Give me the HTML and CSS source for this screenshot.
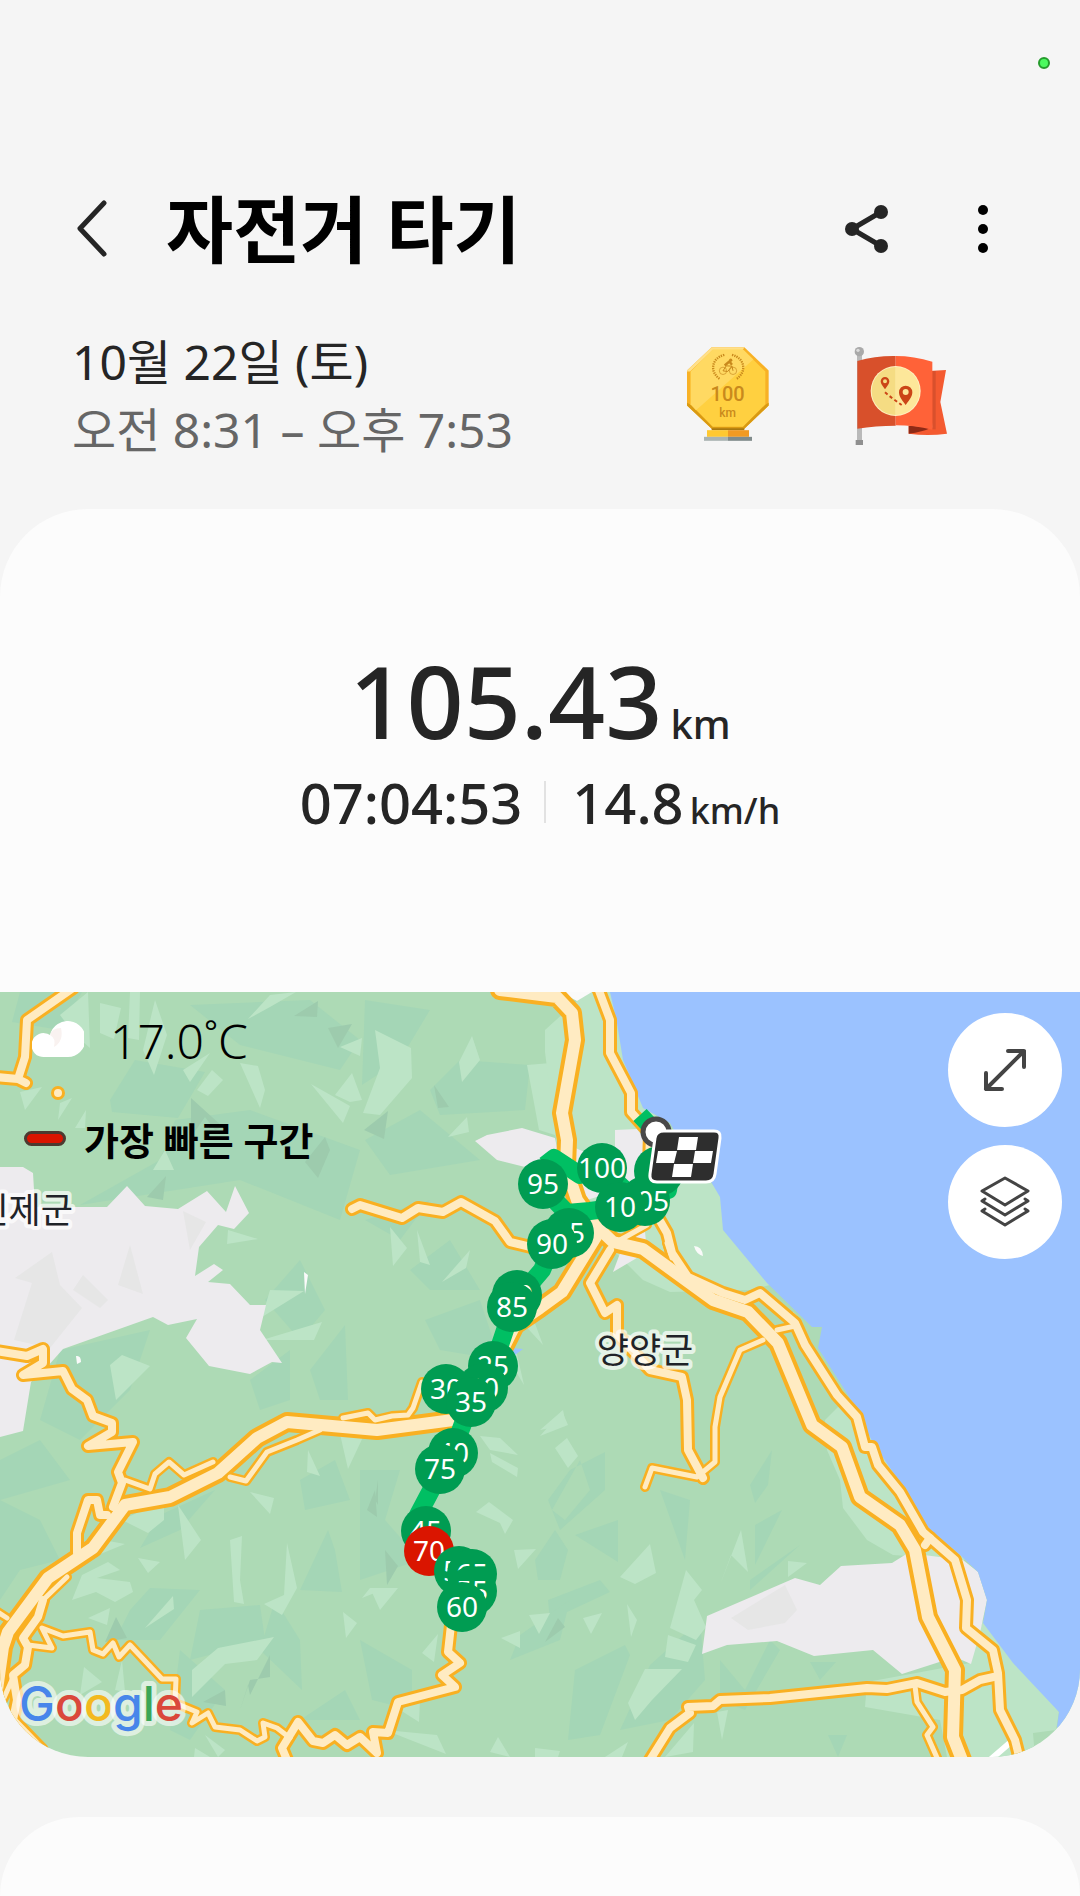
FILE: index.html
```
<!DOCTYPE html>
<html lang="ko">
<head>
    <meta charset="UTF-8">
    <meta name="viewport" content="width=device-width, initial-scale=1.0">
    <title>자전거 타기</title>
    <link rel="stylesheet" href="styles.css">
</head>
<body>
    <div class="status-bar"><span class="camera-dot"></span></div>

    <header class="app-bar">
        <button class="icon-button back" aria-label="뒤로">
            <svg width="32" height="60" viewBox="0 0 32 60"><path d="M28 4 L4 29.500 L28 55"/></svg>
        </button>
        <h1>자전거 타기</h1>
        <button class="icon-button share" aria-label="공유">
            <svg width="44" height="50" viewBox="0 0 44 50">
                <path d="M36 8 L7 25 L36 42"/>
                <circle cx="36" cy="8" r="7"/><circle cx="7" cy="25" r="7"/><circle cx="36" cy="42" r="7"/>
            </svg>
        </button>
        <button class="icon-button more" aria-label="더보기">
            <svg width="12" height="50" viewBox="0 0 12 50">
                <circle cx="6" cy="6" r="5"/><circle cx="6" cy="25" r="5"/><circle cx="6" cy="44" r="5"/>
            </svg>
        </button>
    </header>

    <section class="summary">
        <div class="when">
            <p class="date">10월 22일 (토)</p>
            <p class="time">오전 8:31 – 오후 7:53</p>
        </div>
        <div class="badges">
            <svg width="84" height="97" viewBox="140 82 252 290">
                <path fill="#f8b125" d="M217 85H315L388 155V260L315 330H217L143 260V155Z"/>
                <path fill="#ffe08a" d="M217 85H315L310 94H221L152 158H143V155Z"/>
                <path fill="#d99a12" d="M143 260V252L152 256L221 323H310L380 256L388 252V260L315 330H217Z"/>
                <path fill="#ffd040" d="M220 93H312L378 158V256L311 324H220L154 256V158Z"/>
                <path fill="#ffd962" d="M220 93H312L342 122L170 274L154 256V158Z"/>
                <g fill="none" stroke="#c9891c">
                    <path stroke-width="7" stroke-dasharray="4 3" d="M255 108C215 118 211 160 241 180M278 108C318 118 322 160 292 180"/>
                    <g stroke-width="2"><circle cx="251" cy="156" r="11"/><circle cx="281" cy="156" r="11"/></g>
                    <path stroke-width="3" d="M251 156L261 141L278 142L265 158ZM278 142L281 156"/>
                    <path stroke-width="7" d="M256 140L270 128L278 138"/>
                </g>
                <circle cx="274" cy="124" r="5" fill="#c9891c"/>
                <text class="badge-value" x="265" y="247">100</text>
                <text class="badge-unit" x="265" y="296">km</text>
                <path fill="#a8790f" d="M217 328H315V334H217Z"/>
                <path fill="#ffc830" d="M203 334H266V354H203Z"/>
                <path fill="#f29a22" d="M266 334H329V354H266Z"/>
                <path fill="#aab4b2" d="M194 354H266V366H194Z"/>
                <path fill="#808b8b" d="M266 354H338V366H266Z"/>
            </svg>
            <svg width="94" height="100" viewBox="645 75 282 300">
                <path fill="#b9b9b9" d="M654 98H669V372H654Z"/>
                <path fill="#8f8f8f" d="M650 357H672V372H650Z"/>
                <circle cx="661" cy="92" r="14" fill="#a9a9a9"/>
                <circle cx="657" cy="88" r="5" fill="#dcdcdc"/>
                <path fill="#f45a30" d="M870 150L921 147L904 243L924 338Q866 346 809 338V314L880 320Z"/>
                <path fill="#d9502c" d="M880 150H890V325H880Z"/>
                <path fill="#8f2a16" d="M809 314L880 319Q850 334 809 338Z"/>
                <path fill="#d8502b" d="M655 120Q710 104 770 105V314Q710 314 655 323Z"/>
                <path fill="#ff6238" d="M770 105Q825 105 880 122V326Q825 313 770 313Z"/>
                <circle cx="770" cy="210" r="75" fill="#fff0c0"/>
                <path fill="#f5dc83" d="M770 138A72 72 0 0 0 770 282Z"/>
                <path fill="#fde79a" d="M770 138A72 72 0 0 1 770 282Z"/>
                <path fill="#cb4517" fill-rule="evenodd" d="M738 205C730 194 725 188 725 181A13 13 0 0 1 751 181C751 188 746 194 738 205ZM738 175A6 6 0 1 0 738 187A6 6 0 1 0 738 175ZM800 252C786 234 780 225 780 214A20 20 0 0 1 820 214C820 225 814 234 800 252ZM800 204A9 9 0 1 0 800 222A9 9 0 1 0 800 204Z"/>
                <path fill="none" stroke="#cb4517" stroke-width="6" stroke-dasharray="10 8" d="M738 214L760 232L788 252"/>
            </svg>
        </div>
    </section>

    <main class="card">
        <div class="stats">
            <p class="distance">105.43<span class="unit">km</span></p>
            <div class="stats-row">
                <span>07:04:53</span>
                <span class="divider"></span>
                <span>14.8<span class="unit">km/h</span></span>
            </div>
        </div>

        <div class="map">
            <svg class="map-canvas" viewBox="0 992 1080 765">
                <defs>
                    <g id="roads-small">
                        <path d="M125 1480L150 1489L155 1474L169 1462L184 1475L213 1462"/>
                        <path d="M230 1477L246 1481L267 1452L297 1440L320 1430"/>
                        <path d="M343 1418L368 1413L375 1420L392 1416L408 1415L413 1408L422 1382"/>
                        <path d="M-4 1611L7 1618M28 1645L52 1648L42 1628L63 1636L90 1632L93 1650L103 1654L113 1643L119 1657L130 1645L162 1679L176 1679L175 1703L197 1712L192 1723L208 1713L215 1727L240 1730L257 1741L265 1737L263 1723L277 1728L290 1738"/>
                        <path d="M645 1487L652 1468L697 1477L715 1462L715 1427L720 1397L740 1350L763 1340M777 1330L795 1326"/>
                        <path d="M915 1686L917 1702L933 1727L927 1735L938 1760"/>
                        <path d="M12 1680L3 1700M620 1240L647 1225M672 1258L667 1243"/>
                        <path d="M67 1577L43 1600"/>
                    </g>
                    <g id="roads-medium">
                        <path d="M73 988L27 1020L25 1057L18 1079M-4 1077L18 1079L26 1083M58 1093L58 1093"/>
                        <path d="M-4 1351L27 1356L43 1349L43 1363L23 1375L63 1371L72 1389L87 1400L93 1416L112 1423L112 1432L88 1446L133 1442L118 1472L122 1483L113 1507"/>
                        <path d="M77 1553L77 1533L88 1500L97 1500L100 1515L107 1515"/>
                        <path d="M43 1600L38 1617L23 1638L28 1647L25 1665L13 1675L17 1700L13 1720L42 1750"/>
                        <path d="M287 1760L282 1748L298 1722L313 1741L323 1743L335 1735L347 1745L360 1737L377 1753L373 1732L388 1733L398 1702L455 1687L442 1675L460 1663L448 1652L451 1625"/>
                        <path d="M352 1209L360 1205L402 1218L418 1208L443 1212L461 1202L495 1221L510 1242L535 1248"/>
                        <path d="M598 988L610 1020L610 1053L631 1093L631 1112L650 1133L648 1200L667 1233L672 1253L688 1277L723 1293L745 1300L760 1293L795 1323L805 1345L837 1395L857 1417L865 1447L872 1447L878 1465L900 1492L923 1532L955 1560L967 1600L966 1628L993 1650L998 1673L1000 1710L1015 1740L1020 1760"/>
                        <path d="M610 1250L590 1283L605 1313L617 1305L617 1334L650 1370L682 1377L687 1400L688 1450L703 1478"/>
                        <path d="M650 1760L670 1728L690 1713L688 1707L713 1706L720 1700L770 1698L867 1688L887 1689L917 1683L945 1692L962 1690L980 1680L998 1676"/>
                        <path d="M930 1538L925 1545"/>
                    </g>
                    <g id="roads-large">
                        <path d="M-3 1690L3 1647L8 1632L48 1578L93 1548L125 1505L170 1497L218 1473L257 1438L287 1422L377 1430L453 1420L485 1385L515 1325L540 1308L562 1292L597 1235"/>
                        <path d="M500 990L557 997L572 1013L575 1040L562 1113L567 1140L566 1167L577 1200L593 1223L613 1242L643 1249L713 1300L748 1312L778 1343L812 1425L842 1447L860 1497L900 1525L915 1550L928 1617L955 1670L953 1737L962 1760"/>
                    </g>
                </defs>

                <rect class="land" y="992" width="1080" height="765"/>

                <!-- terrain shading -->
                <g class="terrain-teal">
                    <path d="M20 992L82 992L60 1030L12 1022ZM110 1100L135 1060L205 1072L178 1118L112 1112ZM190 1005L310 1000L360 1040L340 1070L240 1045ZM175 1120L250 1110L360 1150L340 1220L240 1180L80 1205L160 1160Z"/>
                    <path d="M60 1350L150 1330L130 1390L80 1440L40 1420ZM265 1300L300 1260L325 1310L300 1340ZM310 1370L345 1325L348 1400L320 1400ZM300 1480L335 1460L350 1500L305 1510ZM335 1550L328 1530L300 1590L342 1592Z"/>
                    <path d="M0 1460L40 1440L70 1480L0 1500ZM0 1500L40 1520L60 1560L20 1570L0 1600ZM130 1610L150 1588L200 1590L160 1640L115 1640ZM200 1610L260 1605L265 1640L190 1660ZM140 1548L160 1515L215 1490L180 1530Z"/>
                    <path d="M430 1090L460 1060L530 1065L525 1110L440 1115ZM365 1000L430 1010L400 1060L362 1085ZM410 1270L450 1240L480 1290L430 1290ZM425 1320L480 1300L500 1360L440 1350ZM365 1140L420 1110L480 1160L390 1175Z"/>
                    <path d="M570 1470L605 1452L605 1490L560 1530L548 1500ZM535 1560L555 1530L568 1550L560 1580L538 1580ZM575 1535L618 1520L618 1562ZM580 1460L552 1510L565 1520L590 1490ZM548 1600L600 1580L610 1592L550 1620Z"/>
                    <path d="M575 1670L625 1645L630 1655L600 1735L568 1740ZM650 1665L700 1620L705 1680L670 1720L620 1730ZM750 1485L772 1450L768 1485L755 1503ZM755 1525L782 1510L755 1565ZM750 1580L800 1545L750 1590ZM660 1490L690 1500L685 1560Z"/>
                    <path d="M360 1470L400 1470L385 1520L420 1560L360 1580ZM360 1640L412 1670L412 1710L372 1700ZM275 1600L300 1640L302 1690L260 1650ZM828 1735L847 1735L838 1757ZM810 1662L836 1662L820 1680ZM180 1650L225 1690L190 1740L170 1730Z"/>
                    <path d="M430 1200L400 1240L365 1220ZM250 1380L290 1350L290 1400L260 1410ZM300 1720L345 1690L360 1720ZM720 1660L745 1690L770 1640L780 1650L745 1710L720 1700ZM570 1600L520 1635L510 1660L560 1640Z"/>
                </g>
                <g class="terrain-light">
                    <path d="M88 992L90 1048L75 1035L60 1015ZM100 1003L121 1008L114 1039L100 1033ZM130 992L140 992L139 1040L128 1038ZM155 1000L167 1035L154 1075L143 1050ZM248 1019L270 995L296 992L270 1007Z"/>
                    <path d="M183 1070L210 1053L190 1082ZM197 1090L212 1070L223 1080L208 1096ZM240 1063L258 1066L265 1090L260 1108ZM311 1084L350 1106L343 1123ZM335 1095L352 1073L362 1100L350 1102ZM340 1047L362 1038L360 1056Z"/>
                    <path d="M228 1230L258 1239L227 1244ZM270 1290L304 1291L262 1317ZM262 1340L322 1322L314 1340ZM110 1365L122 1355L150 1366L116 1400ZM20 1092L42 1087L25 1110ZM60 1103L72 1098L58 1120ZM153 1170L165 1150L174 1170ZM85 1128L86 1110L75 1128Z"/>
                    <path d="M375 1030L411 1048L412 1078L380 1115L363 1113L380 1068ZM472 1036L480 1060L462 1082L459 1062ZM448 1137L467 1117L469 1132ZM390 1227L407 1248L393 1266ZM417 1230L430 1265L420 1262ZM442 1282L470 1250L466 1268ZM527 1065L563 1062L555 1135L539 1130ZM530 1310L543 1345L520 1320ZM540 1430L563 1410L566 1425ZM516 1350L524 1385L512 1365Z"/>
                    <path d="M178 1505L201 1540L185 1560ZM230 1540L242 1536L240 1580L244 1604L234 1602ZM287 1543L297 1588L282 1615L264 1604L284 1595ZM72 1600L82 1575L108 1562L120 1570L97 1578L130 1582L133 1592L115 1602L96 1592ZM138 1558L160 1562L148 1573ZM145 1628L173 1596L174 1609ZM88 1618L110 1608L107 1625Z"/>
                    <path d="M192 1670L218 1648L274 1637L257 1660L225 1664L192 1697ZM343 1612L357 1623L346 1638ZM250 1492L274 1498L270 1514ZM308 1450L320 1476L307 1472ZM340 1434L363 1437L348 1469ZM370 1588L382 1590L362 1598ZM84 1667L102 1682L80 1695ZM122 1660L125 1692L115 1690ZM205 1735L225 1750L218 1757ZM195 1748L210 1757H194ZM122 1520L164 1500V1520L148 1533ZM103 1540L125 1544L98 1555Z"/>
                    <path d="M480 1436L500 1438L518 1455L490 1450ZM490 1453L518 1468L517 1477L492 1462ZM540 1436L562 1411L568 1425ZM555 1448L567 1438L578 1456L568 1468ZM476 1512L489 1502L513 1520L505 1534L500 1523ZM514 1550L536 1549L518 1569ZM620 1577L650 1544L656 1573L635 1584ZM686 1570L702 1590L694 1600L706 1627L696 1640L670 1628Z"/>
                    <path d="M529 1615L550 1613L539 1634ZM583 1618L602 1613L591 1634ZM627 1604L637 1620L631 1637ZM501 1638L520 1631V1648ZM668 1635L696 1645L688 1662L665 1657ZM645 1669H682L652 1700L635 1720L628 1703ZM370 1588H398L380 1610ZM422 1653L438 1634L434 1662ZM400 1710L420 1700L419 1722ZM385 1730L437 1735L446 1754ZM498 1737L510 1757L490 1752ZM535 1748L560 1751L558 1757H535ZM605 1757L628 1742L622 1757ZM665 1757L694 1723L693 1752Z"/>
                    <path d="M720 1585L741 1530L748 1572L731 1555ZM788 1561L807 1563L788 1577ZM717 1712L728 1710L722 1740Z"/>
                </g>
                <g class="terrain-dark">
                    <path d="M191 1098L223 1127L215 1130L205 1117L191 1137ZM294 1016L318 1001L317 1017ZM328 1028L352 1024L338 1048ZM305 1162L325 1137L330 1150L318 1178ZM147 1197L166 1176L163 1200ZM434 1085L449 1107L438 1108ZM364 1130L388 1111L384 1139ZM105 1642L116 1617L127 1638ZM203 1702L225 1690L226 1706ZM240 1710L248 1685L250 1695L270 1655V1677L250 1680ZM367 1510L375 1490L377 1517ZM385 1550L398 1566L387 1585ZM545 1642L558 1618L565 1627ZM690 1260L700 1253L723 1267L718 1280L700 1273ZM375 1500L378 1480V1505Z"/>
                </g>

                <!-- coastal plain -->
                <path class="plain" d="M545 1030L577 1001L592 992H620L650 1108L723 1197L726 1230L770 1285L750 1290L670 1292L643 1280L613 1250L593 1215L560 1170L545 1052Z"/>
                <path class="plain" d="M825 1420L845 1400L880 1450L965 1560L893 1555L867 1540L843 1508L840 1480L827 1450ZM983 1620L1059 1712L1056 1730L1033 1733L1035 1757H947L940 1720L865 1707L867 1682L970 1663Z"/>

                <!-- built-up areas -->
                <g class="urban">
                    <path d="M0 1167H23L33 1173L35 1207H107L127 1186L145 1206L178 1209L207 1191L226 1212L235 1186L249 1213L234 1229L218 1225L199 1247L195 1276L214 1264L223 1270L208 1282L230 1284L250 1305H266L260 1330L282 1363L272 1362L250 1374L209 1366L186 1338L197 1319L168 1325L153 1317L63 1349L47 1367L31 1382L23 1431L0 1437Z"/>
                    <path d="M475 1141L487 1135L522 1128L555 1138L562 1172L537 1170L497 1160Z"/>
                    <path d="M573 1147L587 1153L610 1193L580 1202L570 1180ZM615 1130L637 1129L650 1147L637 1190L615 1180ZM613 1272L625 1240L645 1232L647 1252Z"/>
                    <path d="M702 1654L707 1616L795 1578L820 1585L841 1566L892 1563L908 1553L963 1560L978 1572L987 1600L980 1633L971 1664L955 1657L902 1674L873 1650L814 1656L777 1641L727 1645Z"/>
                </g>
                <g class="urban-shade">
                    <path d="M15 1278L52 1252L60 1285L82 1308L50 1348L14 1340L32 1283ZM118 1285L130 1245L143 1294ZM73 1290L83 1275L108 1300L100 1308ZM183 1211L206 1222L190 1250ZM731 1618L785 1585L797 1610L785 1623L748 1630Z"/>
                </g>
                <path class="sand" d="M560 992H592L577 1001ZM304 1272L308 1275L305 1294ZM76 1356Q81 1355 81 1362L77 1364ZM694 1246Q702 1246 703 1256Q696 1254 694 1246Z"/>

                <path class="water" d="M610 992L617 1023L623 1060L643 1108L670 1123L690 1160L710 1180L720 1197L723 1230L767 1283L812 1327H822L818 1348L853 1403L873 1443L903 1487L927 1527L960 1555L978 1572L987 1600L983 1623L1013 1663L1059 1712L1057 1727L1080 1757V992ZM511 1348L523 1349L515 1355Z"/>
                <path class="lane" d="M1012 1741L990 1760M790 1319L795 1314"/>

                <g class="casing">
                    <use href="#roads-small" stroke-width="10"/>
                    <use href="#roads-medium" stroke-width="14"/>
                    <use href="#roads-large" stroke-width="20"/>
                </g>
                <g class="surface">
                    <use href="#roads-small" stroke-width="5"/>
                    <use href="#roads-medium" stroke-width="8"/>
                    <use href="#roads-large" stroke-width="12"/>
                </g>

                <g class="map-label">
                    <text x="645" y="1363" text-anchor="middle">양양군</text>
                    <text x="73" y="1223" text-anchor="end">인제군</text>
                </g>

                <path class="route" d="M640 1115L652 1128L672 1165L668 1190L620 1207L590 1211L567 1213L545 1190M545 1165L554 1158L580 1175L602 1168L625 1190L645 1201M575 1212L553 1244L542 1270L514 1303L500 1345L493 1366L471 1402L455 1445L418 1515L426 1540L459 1571L472 1590L455 1628"/>

                <g class="start"><circle cx="656" cy="1132" r="13"/></g>
                <g class="marker" transform="translate(602 1168)"><circle r="25"/><text y="10">100</text></g>
                <g class="marker" transform="translate(659 1171)"><circle r="25"/></g>
                <g class="marker" transform="translate(645 1201)"><circle r="25"/><text y="10">105</text></g>
                <g class="marker" transform="translate(620 1207)"><circle r="25"/><text y="10">10</text></g>
                <g class="marker" transform="translate(543 1184)"><circle r="25"/><text y="10">95</text></g>
                <g class="marker" transform="translate(569 1233)"><circle r="25"/><text y="10">15</text></g>
                <g class="marker" transform="translate(552 1244)"><circle r="25"/><text y="10">90</text></g>
                <g class="marker" transform="translate(517 1295)"><circle r="25"/><text y="10">20</text></g>
                <g class="marker" transform="translate(512 1307)"><circle r="25"/><text y="10">85</text></g>
                <g class="marker" transform="translate(493 1366)"><circle r="25"/><text y="10">25</text></g>
                <g class="marker" transform="translate(446 1389)"><circle r="25"/><text y="10">30</text></g>
                <g class="marker" transform="translate(483 1388)"><circle r="25"/><text y="10">80</text></g>
                <g class="marker" transform="translate(471 1402)"><circle r="25"/><text y="10">35</text></g>
                <g class="marker" transform="translate(453 1453)"><circle r="25"/><text y="10">40</text></g>
                <g class="marker" transform="translate(440 1469)"><circle r="25"/><text y="10">75</text></g>
                <g class="marker" transform="translate(426 1531)"><circle r="25"/><text y="10">45</text></g>
                <g class="marker fastest" transform="translate(429 1551)"><circle r="25"/><text y="10">70</text></g>
                <g class="marker" transform="translate(459 1571)"><circle r="25"/><text y="10">50</text></g>
                <g class="marker" transform="translate(472 1574)"><circle r="25"/><text y="10">65</text></g>
                <g class="marker" transform="translate(472 1591)"><circle r="25"/><text y="10">55</text></g>
                <g class="marker" transform="translate(462 1607)"><circle r="25"/><text y="10">60</text></g>

                <g class="finish">
                    <path class="finish-body" d="M664 1131H714Q721 1131 720 1138L715 1174Q714 1182 706 1182H657Q649 1182 650 1174L655 1138Q656 1131 664 1131Z"/>
                    <path fill="#fff" d="M679 1137H698L696 1150H677ZM658 1151H677L674 1163H656ZM695 1151H713L711 1163H693ZM674 1164H693L691 1177H672Z"/>
                </g>

                <text class="google" x="19" y="1721"><tspan fill="#4886ea">G</tspan><tspan fill="#da483b">o</tspan><tspan fill="#f3b91f">o</tspan><tspan fill="#4886ea">g</tspan><tspan fill="#3ba658">l</tspan><tspan fill="#da483b">e</tspan></text>
            </svg>

            <div class="map-info">
                <div class="weather">
                    <svg width="52" height="38" viewBox="0 0 52 38">
                        <path fill="#fff" d="M13 36A12 12 0 1 1 18 14A18 18 0 1 1 36 36Z"/>
                        <path fill="#f9f2f0" d="M18 14Q20 7 29 7Q32 20 22 26Q24 17 18 14Z"/>
                    </svg>
                    <span>17.0˚C</span>
                </div>
                <div class="legend"><span class="legend-mark"></span><span>가장 빠른 구간</span></div>
            </div>

            <div class="map-controls">
                <button class="round-button" aria-label="지도 확대">
                    <svg width="46" height="46" viewBox="0 0 46 46"><path stroke-width="4" d="M4 42L42 4M26 4H42V20M4 26V42H20"/></svg>
                </button>
                <button class="round-button" aria-label="지도 유형">
                    <svg width="52" height="52" viewBox="0 0 52 52"><path stroke-width="3" d="M26 2L49 15L26 29L3 15ZM6 23L3 25L26 39L49 25L46 23M6 33L3 35L26 49L49 35L46 33"/></svg>
                </button>
            </div>
        </div>
    </main>

    <section class="card next-card"></section>
</body>
</html>
```
FILE: styles.css
```
* {
    box-sizing: border-box;
}
body {
    margin: 0;
    min-height: 100vh;
    display: flex;
    flex-direction: column;
    background-color: #f5f5f5;
    color: #252525;
    font-family: "Noto Sans", "Noto Sans CJK KR", sans-serif;
}
h1, p {
    margin: 0;
}
button {
    padding: 0;
    border: none;
    cursor: pointer;
}
svg {
    display: block;
}

/* header */
.status-bar {
    display: flex;
    justify-content: flex-end;
    height: 124px;
    padding: 57px 30px 0;
}
.camera-dot {
    width: 12px;
    height: 12px;
    border: 2px solid #259b2c;
    border-radius: 50%;
    background-color: #4cfa60;
}
.app-bar {
    display: flex;
    align-items: center;
    height: 210px;
    padding: 0 91px 0 76px;
}
.app-bar h1 {
    flex: 1;
    margin-left: 58px;
    color: #000;
    font-size: 73px;
    font-weight: 700;
    line-height: 100px;
}
.icon-button {
    background: none;
}
.back path,
.share path {
    fill: none;
    stroke: #252525;
    stroke-width: 5px;
    stroke-linecap: round;
    stroke-linejoin: round;
}
.share circle {
    fill: #252525;
}
.more {
    margin-left: 88px;
}
.summary {
    display: flex;
    justify-content: space-between;
    align-items: center;
    height: 175px;
    padding: 0 132px 52px 72px;
}
.when {
    font-size: 48px;
    line-height: 68px;
}
.time {
    color: #666;
}
.badges {
    display: flex;
    gap: 84px;
}
.badge-value,
.badge-unit {
    fill: #c9891c;
    font-family: Roboto, sans-serif;
    font-weight: 500;
    text-anchor: middle;
}
.badge-value {
    font-size: 60px;
}
.badge-unit {
    font-size: 36px;
}

/* main card */
.card {
    border-radius: 88px;
    background-color: #fcfcfc;
    overflow: hidden;
}
.stats {
    display: flex;
    flex-direction: column;
    align-items: center;
    padding: 125px 0 154px;
    font-weight: 500;
}
.distance {
    font-size: 100px;
    line-height: 132px;
}
.unit {
    line-height: 1;
}
.distance .unit {
    margin-left: 8px;
    font-size: 40px;
}
.stats-row {
    display: flex;
    align-items: center;
    font-size: 56px;
    line-height: 72px;
}
.stats-row .unit {
    margin-left: 6px;
    font-size: 36px;
}
.divider {
    width: 2px;
    height: 42px;
    margin: 0 26px 0 22px;
    background-color: #e2e2e2;
}
.next-card {
    flex: 1;
    min-height: 79px;
    margin-top: 60px;
    border-radius: 88px 88px 0 0;
}

/* map */
.map {
    position: relative;
}
.map-canvas {
    width: 100%;
    height: auto;
}
.land {
    fill: #addab5;
}
.terrain-teal {
    fill: #a4d6b6;
}
.terrain-light,
.plain {
    fill: #bce4c6;
}
.terrain-dark {
    fill: #9dcbad;
}
.urban {
    fill: #edebee;
}
.urban-shade {
    fill: #e6e6e6;
}
.sand {
    fill: #fafafa;
}
.water {
    fill: #9bc2ff;
}
.lane {
    stroke: #fff;
    stroke-width: 6px;
}
.casing,
.surface {
    fill: none;
    stroke-linecap: round;
    stroke-linejoin: round;
}
.casing {
    stroke: #f9b022;
}
.surface {
    stroke: #ffebc2;
}
.map-label text {
    font-size: 35px;
    fill: #1f2328;
    stroke: rgba(255, 255, 255, 0.7);
    stroke-width: 8px;
    stroke-linejoin: round;
    paint-order: stroke;
}
.route {
    fill: none;
    stroke: #00bf63;
    stroke-width: 18px;
    stroke-linejoin: round;
}
.start circle {
    fill: #fff;
    stroke: #484848;
    stroke-width: 5px;
}
.marker circle {
    fill: #009c52;
}
.marker text {
    fill: #fff;
    font-size: 28px;
    text-anchor: middle;
}
.fastest circle {
    fill: #da1500;
}
.finish-body {
    fill: #2e2e2e;
    stroke: #fff;
    stroke-width: 3px;
}
.google {
    font-family: Inter, sans-serif;
    font-size: 48px;
    font-weight: 500;
    stroke: rgba(255, 255, 255, 0.6);
    stroke-width: 10px;
    stroke-linejoin: round;
    paint-order: stroke;
}
.map-info {
    position: absolute;
    top: 18px;
    left: 24px;
    color: #000;
}
.weather,
.legend {
    display: flex;
    align-items: center;
}
.weather {
    height: 60px;
    padding-left: 8px;
    gap: 26px;
    font-size: 48px;
    font-weight: 300;
}
.legend {
    height: 60px;
    margin-top: 38px;
    gap: 18px;
    font-size: 38px;
    font-weight: 700;
}
.legend-mark {
    width: 42px;
    height: 15px;
    border: 3px solid #4d3a30;
    border-radius: 8px;
    background-color: #da1500;
}
.map-controls {
    position: absolute;
    top: 21px;
    right: 18px;
    display: flex;
    flex-direction: column;
    gap: 18px;
}
.round-button {
    display: flex;
    align-items: center;
    justify-content: center;
    width: 114px;
    height: 114px;
    border-radius: 50%;
    background-color: #fff;
}
.round-button path {
    fill: none;
    stroke: #444;
    stroke-linecap: round;
    stroke-linejoin: round;
}
```
